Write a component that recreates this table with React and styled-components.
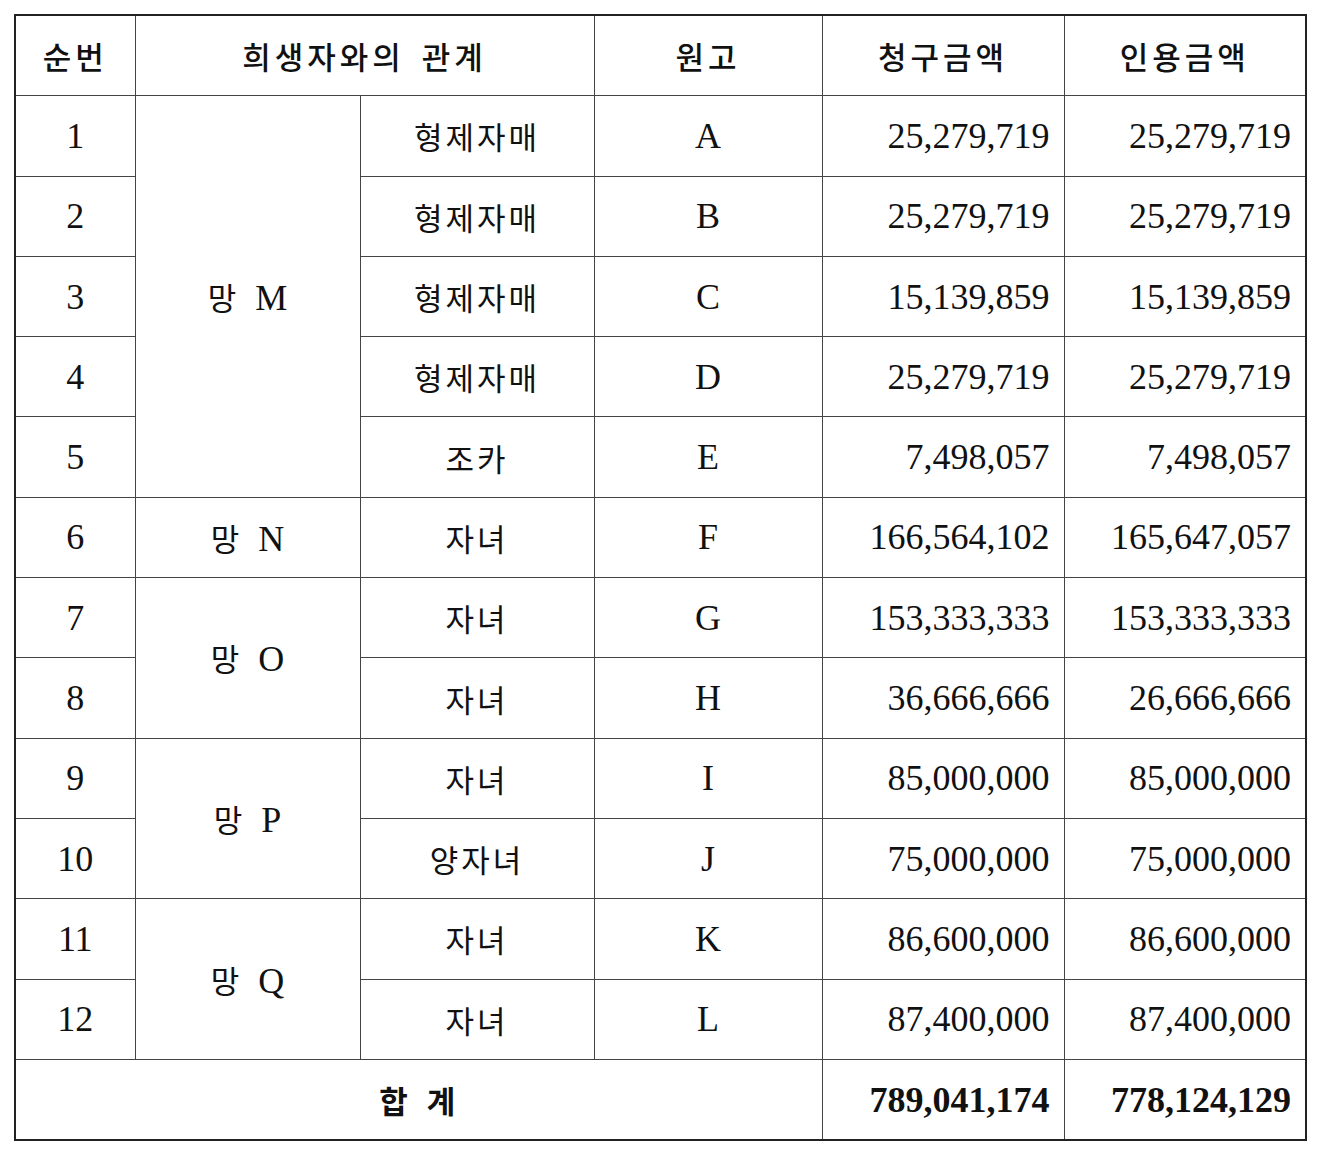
import { createGlobalStyle, styled } from 'styled-components'

const rows = [
    { no: 1, rel: '형제자매', who: 'A', claim: '25,279,719', granted: '25,279,719' },
    { no: 2, rel: '형제자매', who: 'B', claim: '25,279,719', granted: '25,279,719' },
    { no: 3, rel: '형제자매', who: 'C', claim: '15,139,859', granted: '15,139,859' },
    { no: 4, rel: '형제자매', who: 'D', claim: '25,279,719', granted: '25,279,719' },
    { no: 5, rel: '조카', who: 'E', claim: '7,498,057', granted: '7,498,057' },
    { no: 6, rel: '자녀', who: 'F', claim: '166,564,102', granted: '165,647,057' },
    { no: 7, rel: '자녀', who: 'G', claim: '153,333,333', granted: '153,333,333' },
    { no: 8, rel: '자녀', who: 'H', claim: '36,666,666', granted: '26,666,666' },
    { no: 9, rel: '자녀', who: 'I', claim: '85,000,000', granted: '85,000,000' },
    { no: 10, rel: '양자녀', who: 'J', claim: '75,000,000', granted: '75,000,000' },
    { no: 11, rel: '자녀', who: 'K', claim: '86,600,000', granted: '86,600,000' },
    { no: 12, rel: '자녀', who: 'L', claim: '87,400,000', granted: '87,400,000' },
]

// first row of each victim group, with how many rows it spans
const groups = {
    1: { name: 'M', span: 5 },
    6: { name: 'N', span: 1 },
    7: { name: 'O', span: 2 },
    9: { name: 'P', span: 2 },
    11: { name: 'Q', span: 2 },
}

const App = () => {
    return (
        <>
            <GlobalStyle />
            <Page>
                <Table>
                    <colgroup>
                        <col style={{ width: 120 }} />
                        <col style={{ width: 225 }} />
                        <col style={{ width: 234 }} />
                        <col style={{ width: 228 }} />
                        <col style={{ width: 242 }} />
                        <col style={{ width: 242 }} />
                    </colgroup>
                    <thead>
                        <tr>
                            <HeadCell>순번</HeadCell>
                            <HeadCell colSpan={2}>희생자와의 관계</HeadCell>
                            <HeadCell>원고</HeadCell>
                            <HeadCell>청구금액</HeadCell>
                            <HeadCell>인용금액</HeadCell>
                        </tr>
                    </thead>
                    <tbody>
                        {
                            rows.map((row) =>
                                <tr key={row.no}>
                                    <Cell><Num>{row.no}</Num></Cell>
                                    {
                                        groups[row.no] &&
                                        <Cell rowSpan={groups[row.no].span}>
                                            <Hangul>망</Hangul><Gap /><Num>{groups[row.no].name}</Num>
                                        </Cell>
                                    }
                                    <Cell><Hangul>{row.rel}</Hangul></Cell>
                                    <Cell><Num>{row.who}</Num></Cell>
                                    <Cell align={'right'}><Num>{row.claim}</Num></Cell>
                                    <Cell align={'right'}><Num>{row.granted}</Num></Cell>
                                </tr>
                            )
                        }
                        <tr>
                            <Cell colSpan={4}><Hangul bold>합</Hangul><Gap /><Hangul bold>계</Hangul></Cell>
                            <Cell align={'right'}><Num bold>789,041,174</Num></Cell>
                            <Cell align={'right'}><Num bold>778,124,129</Num></Cell>
                        </tr>
                    </tbody>
                </Table>
            </Page>
        </>
    )
}

// Components

const GlobalStyle = createGlobalStyle`
      body {
        margin: 0;
        background: #ffffff;
        color: #111111;
      }
    `

const Table = styled.table`
      border-collapse: collapse;
      table-layout: fixed;
      width: 1291px;
      border: 2px solid #222222;
    `

const HeadCell = styled.th`
      height: 79.3px;
      padding: 0;
      border: 1px solid #444444;
      font-family: "Noto Sans CJK KR", sans-serif;
      font-weight: 500;
      font-size: 31px;
      letter-spacing: 4px;
      word-spacing: 6px;
      text-align: center;
      vertical-align: middle;
    `

const Cell = styled.td`
      height: 79.3px;
      padding: 0 ${({ align }) => align === 'right' ? '14px' : '0'} 0 0;
      border: 1px solid #444444;
      text-align: ${({ align }) => align === 'right' ? 'right' : 'center'};
      vertical-align: middle;
      white-space: nowrap;
    `

const Num = styled.span`
      font-family: "Liberation Serif", "Noto Sans CJK KR", serif;
      font-size: 36px;
      font-weight: ${({ bold }) => bold ? 700 : 400};
    `

const Hangul = styled.span`
      font-family: "Noto Sans CJK KR", sans-serif;
      font-size: 31px;
      font-weight: ${({ bold }) => bold ? 700 : 400};
      letter-spacing: 3px;
    `

const Gap = styled.span`
      display: inline-block;
      width: 16px;
    `

// Layouts

const Page = styled.div`
      padding: 14px 0 0 14px;
    `

export default App;
